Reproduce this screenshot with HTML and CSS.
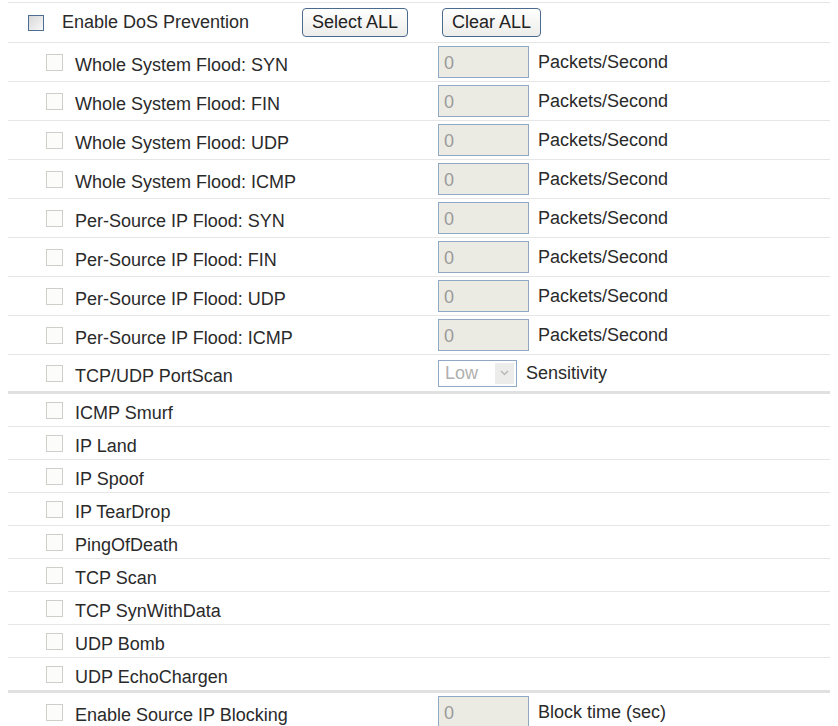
FILE: index.html
```html
<!DOCTYPE html>
<html>

<head>
    <title>DoS Prevention</title>
    <link rel="stylesheet" href="styles.css">
</head>

<body>
    <div class="list">
        <div class="row head">
            <span class="box main"></span>
            <span class="title">Enable DoS Prevention</span>
            <button class="btn">Select ALL</button>
            <button class="btn">Clear ALL</button>
        </div>

        <div class="row tall">
            <span class="box"></span><span class="label">Whole System Flood: SYN</span>
            <span class="field">0</span><span class="unit">Packets/Second</span>
        </div>
        <div class="row tall">
            <span class="box"></span><span class="label">Whole System Flood: FIN</span>
            <span class="field">0</span><span class="unit">Packets/Second</span>
        </div>
        <div class="row tall">
            <span class="box"></span><span class="label">Whole System Flood: UDP</span>
            <span class="field">0</span><span class="unit">Packets/Second</span>
        </div>
        <div class="row tall">
            <span class="box"></span><span class="label">Whole System Flood: ICMP</span>
            <span class="field">0</span><span class="unit">Packets/Second</span>
        </div>
        <div class="row tall">
            <span class="box"></span><span class="label">Per-Source IP Flood: SYN</span>
            <span class="field">0</span><span class="unit">Packets/Second</span>
        </div>
        <div class="row tall">
            <span class="box"></span><span class="label">Per-Source IP Flood: FIN</span>
            <span class="field">0</span><span class="unit">Packets/Second</span>
        </div>
        <div class="row tall">
            <span class="box"></span><span class="label">Per-Source IP Flood: UDP</span>
            <span class="field">0</span><span class="unit">Packets/Second</span>
        </div>
        <div class="row tall">
            <span class="box"></span><span class="label">Per-Source IP Flood: ICMP</span>
            <span class="field">0</span><span class="unit">Packets/Second</span>
        </div>
        <div class="row scan">
            <span class="box"></span><span class="label">TCP/UDP PortScan</span>
            <span class="select">Low<span class="arrow"><svg width="9" height="6" viewBox="0 0 9 6"><path d="M1 1 L4.5 4.5 L8 1" fill="none" stroke="#b8b8b8" stroke-width="1.5"/></svg></span></span>
            <span class="unit">Sensitivity</span>
        </div>

        <div class="row split"><span class="box"></span><span class="label">ICMP Smurf</span></div>
        <div class="row"><span class="box"></span><span class="label">IP Land</span></div>
        <div class="row"><span class="box"></span><span class="label">IP Spoof</span></div>
        <div class="row"><span class="box"></span><span class="label">IP TearDrop</span></div>
        <div class="row"><span class="box"></span><span class="label">PingOfDeath</span></div>
        <div class="row"><span class="box"></span><span class="label">TCP Scan</span></div>
        <div class="row"><span class="box"></span><span class="label">TCP SynWithData</span></div>
        <div class="row"><span class="box"></span><span class="label">UDP Bomb</span></div>
        <div class="row"><span class="box"></span><span class="label">UDP EchoChargen</span></div>

        <div class="row tall split">
            <span class="box"></span><span class="label">Enable Source IP Blocking</span>
            <span class="field">0</span><span class="unit">Block time (sec)</span>
        </div>
    </div>
</body>

</html>
```

FILE: styles.css
```css
body {
    margin: 0 8px;
    font-family: "Liberation Sans", Arial, sans-serif;
    font-size: 18px;
    color: #2a2a2a;
    background-color: white;
}

.list {
    margin-top: 2px;
    border-top: 1px solid #e6e6e6;
}

.row {
    display: flex;
    align-items: center;
    height: 32px;
    padding-left: 38px;
    border-top: 1px solid #e6e6e6;
}

.row:first-child {
    border-top: none;
}

.row.tall {
    height: 38px;
}

.row.scan {
    height: 36px;
}

.row.split {
    border-top: 3px solid #e0e0e0;
}

.head {
    height: 39px;
    padding-left: 20px;
}

.box {
    width: 17px;
    height: 17px;
    border: 1px solid #cfcfca;
    background: #fcfcfb;
    margin-right: 12px;
    flex-shrink: 0;
    box-sizing: border-box;
}

.box.main {
    width: 16px;
    height: 16px;
    border: 1px solid #4d6e91;
    background: linear-gradient(135deg, #d8d8d8, #f8f8f8);
    margin-right: 18px;
}

.title {
    width: 240px;
}

.label {
    width: 363px;
    padding-top: 6px;
}

.btn {
    font-family: "Liberation Sans", Arial, sans-serif;
    font-size: 18px;
    color: #222;
    height: 29px;
    padding: 0 9px;
    margin-right: 34px;
    border: 1px solid #4a6b8c;
    border-radius: 4px;
    background: linear-gradient(#ffffff, #ececea);
}

.field {
    width: 91px;
    height: 32px;
    box-sizing: border-box;
    border: 1px solid #8fa8c3;
    background: #ebebe4;
    color: #9a9a9a;
    padding: 6px 0 0 5px;
    margin-right: 9px;
}

.select {
    display: flex;
    align-items: center;
    justify-content: space-between;
    width: 79px;
    height: 27px;
    box-sizing: border-box;
    border: 1px solid #8fa8c3;
    color: #b0b0b0;
    padding: 0 2px 0 6px;
    margin-right: 9px;
}

.arrow {
    display: flex;
    align-items: center;
    justify-content: center;
    width: 19px;
    height: 21px;
    background: #ececea;
}

.unit {
    color: #2a2a2a;
}
```
